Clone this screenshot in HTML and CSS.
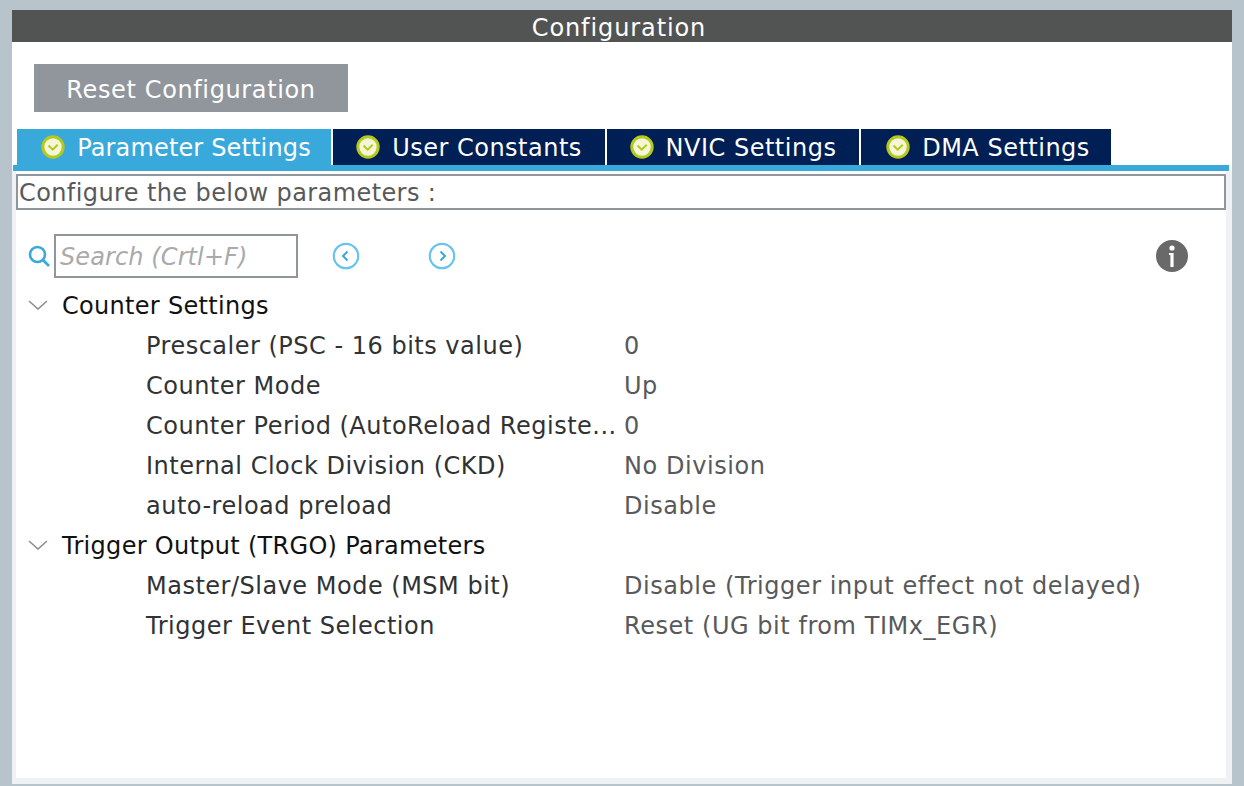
FILE: index.html
```html
<!DOCTYPE html>
<html lang="en">
<head>
<meta charset="utf-8">
<title>Configuration</title>
<link rel="stylesheet" href="styles.css">
</head>
<body>
<main class="frame">
  <header class="title">Configuration</header>
  <div class="inner">
    <div class="reset-row"><button class="reset">Reset Configuration</button></div>
    <nav class="tabs">
      <div class="tab tab-active t1"><svg class="chk" viewBox="0 0 24 24"><circle cx="12" cy="12" r="10.2" fill="#f4f6d8" stroke="#b5c81e" stroke-width="3"/><path d="M7.5 10.5l4.2 4.2 5-5" fill="none" stroke="#b5c81e" stroke-width="2"/></svg><span>Parameter Settings</span></div>
      <div class="tab t2"><svg class="chk" viewBox="0 0 24 24"><circle cx="12" cy="12" r="10.2" fill="#f4f6d8" stroke="#b5c81e" stroke-width="3"/><path d="M7.5 10.5l4.2 4.2 5-5" fill="none" stroke="#b5c81e" stroke-width="2"/></svg><span>User Constants</span></div>
      <div class="tab t3"><svg class="chk" viewBox="0 0 24 24"><circle cx="12" cy="12" r="10.2" fill="#f4f6d8" stroke="#b5c81e" stroke-width="3"/><path d="M7.5 10.5l4.2 4.2 5-5" fill="none" stroke="#b5c81e" stroke-width="2"/></svg><span>NVIC Settings</span></div>
      <div class="tab t4"><svg class="chk" viewBox="0 0 24 24"><circle cx="12" cy="12" r="10.2" fill="#f4f6d8" stroke="#b5c81e" stroke-width="3"/><path d="M7.5 10.5l4.2 4.2 5-5" fill="none" stroke="#b5c81e" stroke-width="2"/></svg><span>DMA Settings</span></div>
    </nav>
    <div class="tabline"></div>
    <div class="content">
      <div class="configure">Configure the below parameters :</div>
      <div class="tools">
        <svg class="search-ic" viewBox="0 0 24 24"><circle cx="10.5" cy="10.5" r="7.5" fill="none" stroke="#39a9dc" stroke-width="2.6"/><path d="M16 16l6 6" stroke="#39a9dc" stroke-width="2.6"/></svg>
        <div class="search">Search (Crtl+F)</div>
        <svg class="nav-ic prev" viewBox="0 0 28 28"><circle cx="14" cy="14" r="12.2" fill="none" stroke="#6cc3ea" stroke-width="2.2"/><path d="M15.5 9.5l-4.5 4.5 4.5 4.5" fill="none" stroke="#39a9dc" stroke-width="2"/></svg>
        <svg class="nav-ic next" viewBox="0 0 28 28"><circle cx="14" cy="14" r="12.2" fill="none" stroke="#6cc3ea" stroke-width="2.2"/><path d="M12.5 9.5l4.5 4.5-4.5 4.5" fill="none" stroke="#39a9dc" stroke-width="2"/></svg>
        <svg class="info-ic" viewBox="0 0 32 32"><circle cx="16" cy="16" r="16" fill="#696969"/><circle cx="16" cy="8" r="2.6" fill="#fff"/><path d="M13 13h4.6v14h-3.2V15H13z" fill="#fff"/></svg>
      </div>
      <section class="tree">
        <div class="group"><svg class="caret" viewBox="0 0 20 10"><path d="M1 1l9 8 9-8" fill="none" stroke="#8a8f93" stroke-width="1.6"/></svg><span>Counter Settings</span></div>
        <div class="row"><span class="name">Prescaler (PSC - 16 bits value)</span><span class="val">0</span></div>
        <div class="row"><span class="name">Counter Mode</span><span class="val">Up</span></div>
        <div class="row"><span class="name">Counter Period (AutoReload Registe...</span><span class="val">0</span></div>
        <div class="row"><span class="name">Internal Clock Division (CKD)</span><span class="val">No Division</span></div>
        <div class="row"><span class="name">auto-reload preload</span><span class="val">Disable</span></div>
        <div class="group"><svg class="caret" viewBox="0 0 20 10"><path d="M1 1l9 8 9-8" fill="none" stroke="#8a8f93" stroke-width="1.6"/></svg><span>Trigger Output (TRGO) Parameters</span></div>
        <div class="row"><span class="name">Master/Slave Mode (MSM bit)</span><span class="val">Disable (Trigger input effect not delayed)</span></div>
        <div class="row"><span class="name">Trigger Event Selection</span><span class="val">Reset (UG bit from TIMx_EGR)</span></div>
      </section>
    </div>
  </div>
</main>
</body>
</html>
```
FILE: styles.css
```css
* { box-sizing: border-box; }
html, body { margin: 0; height: 100%; }
body {
  background: #b8c4cb;
  padding: 10px 12px 2px;
  font-family: "DejaVu Sans", "Open Sans", sans-serif;
  font-size: 24px;
  letter-spacing: 0.5px;
  overflow: hidden;
}
.frame { height: 774px; display: flex; flex-direction: column; background: #eff1f4; }
.title {
  height: 32px; flex: none; padding: 4px 6px 0 0;
  background: #525453; color: #fff;
  letter-spacing: 0.9px;
  display: flex; align-items: center; justify-content: center;
}
.inner { flex: 1; display: flex; flex-direction: column; background: linear-gradient(#fff 129px, transparent 129px); }
.reset-row { height: 87px; flex: none; padding: 22px 0 0 22px; }
.reset {
  display: block; width: 314px; height: 48px; border: 0; padding: 4px 0 0;
  background: #90969c; color: #fff;
  font: inherit; letter-spacing: 0.63px;
}
.tabs { display: flex; height: 36px; flex: none; gap: 2px; padding-left: 5px; background: #fff; }
.tab {
  display: flex; align-items: center; justify-content: center; gap: 12px;
  background: #001f54; color: #fff; height: 36px; padding-top: 2px;
}
.tab-active { background: #39a9dc; }
.t1 { width: 314px; letter-spacing: 0.15px; padding-left: 4px; }
.t2 { width: 272px; }
.t3 { width: 252px; }
.t4 { width: 250px; padding-left: 4px; }
.chk { width: 24px; height: 24px; flex: none; margin-top: -2px; }
.tabline { height: 6px; flex: none; margin: 0 3px 0 1px; background: #39a9dc; }
.content { flex: 1; margin: 0 6px 6px 4px; background: #fff; padding-top: 3px; color: #58595b; }
.configure {
  height: 36px; border: 2px solid #90969c; line-height: 35px; padding-left: 1px; letter-spacing: 0.4px;
}
.tools { height: 50px; margin-top: 21px; display: flex; align-items: center; position: relative; }
.search-ic { width: 24px; height: 24px; margin-left: 11px; flex: none; }
.search {
  width: 244px; height: 44px; margin-left: 3px; flex: none;
  border: 2px solid #90969c; padding-left: 4px; line-height: 42px;
  color: #a8aaac; font-style: italic; letter-spacing: 0.1px;
}
.nav-ic { width: 28px; height: 28px; flex: none; }
.prev { margin-left: 34px; }
.next { margin-left: 68px; }
.info-ic { width: 32px; height: 32px; flex: none; margin-left: auto; margin-right: 38px; }
.tree { margin-top: 3px; }
.group, .row { height: 40px; display: flex; align-items: center; padding-top: 4px; }
.group { color: #111; padding-left: 12px; letter-spacing: 0.3px; }
.caret { width: 20px; height: 10px; flex: none; margin: -3px 14px 0 0; }
.row { padding-left: 130px; }
.name { width: 478px; flex: none; color: #303234; white-space: nowrap; }
.val { white-space: nowrap; letter-spacing: 0.55px; }
```
